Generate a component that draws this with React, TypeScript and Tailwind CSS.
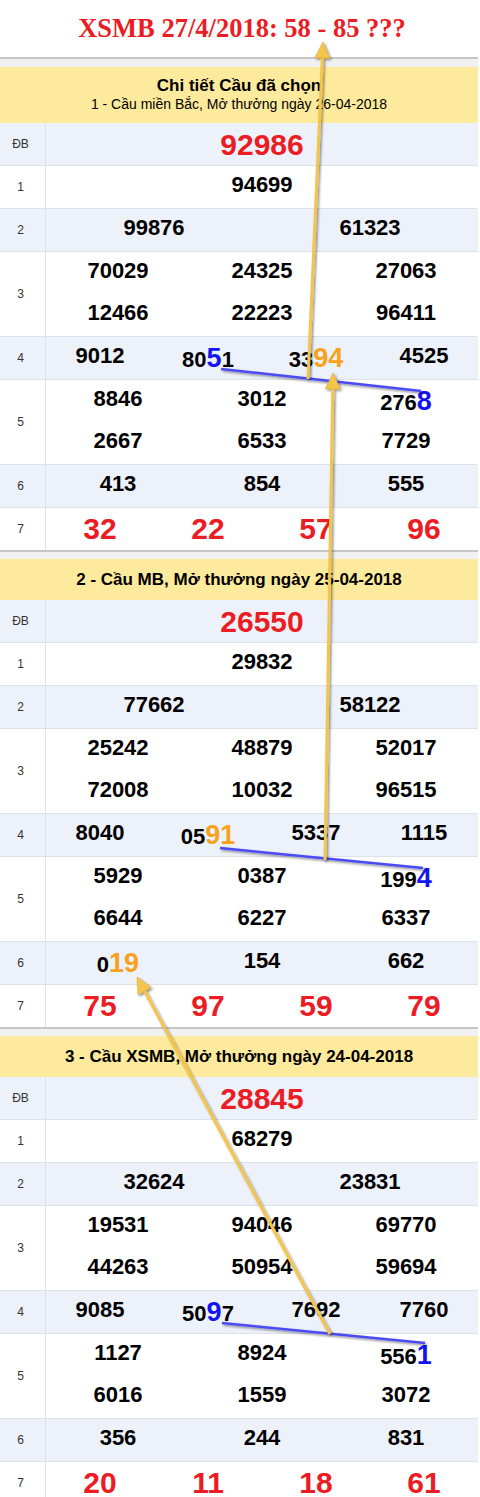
import React from "react";

type Tone = "blue" | "white";

interface RowData {
  label: string;
  cols: number;
  cells: string[];
  kind?: "normal" | "special" | "red";
}

interface SectionData {
  title: string;
  subtitle?: string;
  rows: RowData[];
}

const sections: SectionData[] = [
  {
    title: "Chi tiết Cầu đã chọn",
    subtitle: "1 - Cầu miền Bắc, Mở thưởng ngày 26-04-2018",
    rows: [
      { label: "ĐB", cols: 1, cells: ["92986"], kind: "special" },
      { label: "1", cols: 1, cells: ["94699"] },
      { label: "2", cols: 2, cells: ["99876", "61323"] },
      { label: "3", cols: 3, cells: ["70029", "24325", "27063", "12466", "22223", "96411"] },
      { label: "4", cols: 4, cells: ["9012", "80[5]1", "33{94}", "4525"] },
      { label: "5", cols: 3, cells: ["8846", "3012", "276[8]", "2667", "6533", "7729"] },
      { label: "6", cols: 3, cells: ["413", "854", "555"] },
      { label: "7", cols: 4, cells: ["32", "22", "57", "96"], kind: "red" },
    ],
  },
  {
    title: "2 - Cầu MB, Mở thưởng ngày 25-04-2018",
    rows: [
      { label: "ĐB", cols: 1, cells: ["26550"], kind: "special" },
      { label: "1", cols: 1, cells: ["29832"] },
      { label: "2", cols: 2, cells: ["77662", "58122"] },
      { label: "3", cols: 3, cells: ["25242", "48879", "52017", "72008", "10032", "96515"] },
      { label: "4", cols: 4, cells: ["8040", "05{91}", "5337", "1115"] },
      { label: "5", cols: 3, cells: ["5929", "0387", "199[4]", "6644", "6227", "6337"] },
      { label: "6", cols: 3, cells: ["0{19}", "154", "662"] },
      { label: "7", cols: 4, cells: ["75", "97", "59", "79"], kind: "red" },
    ],
  },
  {
    title: "3 - Cầu XSMB, Mở thưởng ngày 24-04-2018",
    rows: [
      { label: "ĐB", cols: 1, cells: ["28845"], kind: "special" },
      { label: "1", cols: 1, cells: ["68279"] },
      { label: "2", cols: 2, cells: ["32624", "23831"] },
      { label: "3", cols: 3, cells: ["19531", "94046", "69770", "44263", "50954", "59694"] },
      { label: "4", cols: 4, cells: ["9085", "50[9]7", "7692", "7760"] },
      { label: "5", cols: 3, cells: ["1127", "8924", "556[1]", "6016", "1559", "3072"] },
      { label: "6", cols: 3, cells: ["356", "244", "831"] },
      { label: "7", cols: 4, cells: ["20", "11", "18", "61"], kind: "red" },
    ],
  },
];

// [x] = blue digit, {x} = orange digit
function CellText({ text }: { text: string }) {
  const parts = text.split(/(\[[^\]]+\]|\{[^}]+\})/).filter(Boolean);
  return (
    <>
      {parts.map((p, i) => {
        if (p.startsWith("[")) {
          return (
            <span key={i} className="text-[27px] font-bold text-[#1414f2]">
              {p.slice(1, -1)}
            </span>
          );
        }
        if (p.startsWith("{")) {
          return (
            <span key={i} className="text-[27px] font-bold text-[#f7a21c]">
              {p.slice(1, -1)}
            </span>
          );
        }
        return <span key={i}>{p}</span>;
      })}
    </>
  );
}

const gridCols: Record<number, string> = {
  1: "grid-cols-1",
  2: "grid-cols-2",
  3: "grid-cols-3",
  4: "grid-cols-4",
};

function Row({ row, tone, last }: { row: RowData; tone: Tone; last: boolean }) {
  const bg = tone === "blue" ? "bg-[#edf1fa]" : "bg-white";
  const kind = row.kind ?? "normal";
  const textCls =
    kind === "normal"
      ? "pt-[6px] text-[22px] font-bold text-black"
      : kind === "special"
        ? "pt-[5px] text-[30px] font-bold text-[#ec1c24]"
        : "pt-[4px] text-[30px] font-bold text-[#ec1c24]";

  return (
    <div className={`flex ${bg} ${last ? "" : "border-b border-[#dde2ea]"}`}>
      <div className="w-[46px] shrink-0 border-r border-[#dde2ea] flex items-center justify-center pr-[4px] text-[12px] text-[#333]">
        {row.label}
      </div>
      <div className={`flex-1 grid ${gridCols[row.cols]}`}>
        {row.cells.map((c, i) => (
          <div key={i} className={`h-[42px] text-center leading-[normal] whitespace-nowrap ${textCls}`}>
            <CellText text={c} />
          </div>
        ))}
      </div>
    </div>
  );
}

function Section({ section }: { section: SectionData }) {
  return (
    <div>
      {section.subtitle ? (
        <div className="h-[56px] bg-[#feea9c] flex flex-col items-center justify-center text-black">
          <div className="text-[17px] font-bold leading-[19px]">{section.title}</div>
          <div className="text-[14px] leading-[19px]">{section.subtitle}</div>
        </div>
      ) : (
        <div className="h-[41px] bg-[#feea9c] flex items-center justify-center text-[17px] font-bold text-black">
          {section.title}
        </div>
      )}
      <div>
        {section.rows.map((r, i) => (
          <Row key={i} row={r} tone={i % 2 === 0 ? "blue" : "white"} last={i === section.rows.length - 1} />
        ))}
      </div>
      <div className="h-[2px] bg-[#c6c6c6]" />
      <div className="h-[7px] bg-[#f1f1f1]" />
    </div>
  );
}

function Arrow({ x1, y1, x2, y2 }: { x1: number; y1: number; x2: number; y2: number }) {
  const dx = x2 - x1;
  const dy = y2 - y1;
  const len = Math.hypot(dx, dy);
  const ux = dx / len;
  const uy = dy / len;
  const hl = 16;
  const hw = 7.5;
  const bx = x2 - ux * hl;
  const by = y2 - uy * hl;
  const pts = `${x2},${y2} ${bx - uy * hw},${by + ux * hw} ${bx + uy * hw},${by - ux * hw}`;
  return (
    <g filter="url(#shade)">
      <line x1={x1} y1={y1} x2={bx + ux * 2} y2={by + uy * 2} stroke="#f4c54b" strokeWidth={3} />
      <polygon points={pts} fill="#f4c54b" stroke="#dcab35" strokeWidth={0.6} />
    </g>
  );
}

function Overlay() {
  return (
    <svg className="absolute top-0 left-0 pointer-events-none" width={480} height={1497} viewBox="0 0 480 1497">
      <defs>
        <filter id="shade" x="-20%" y="-20%" width="140%" height="140%">
          <feDropShadow dx="1.5" dy="1.5" stdDeviation="1.2" floodColor="#000" floodOpacity="0.45" />
        </filter>
      </defs>
      <g filter="url(#shade)" stroke="#4c4cf5" strokeWidth={2.5}>
        <line x1={221} y1={369} x2={421} y2={391} />
        <line x1={220} y1={848} x2={423} y2={868} />
        <line x1={222} y1={1323} x2={425} y2={1343} />
      </g>
      <Arrow x1={308} y1={379} x2={323} y2={42} />
      <Arrow x1={325} y1={860} x2={333} y2={373} />
      <Arrow x1={330} y1={1334} x2={137} y2={977} />
    </svg>
  );
}

export default function App() {
  return (
    <div className="relative w-[480px] bg-white pr-[2px] font-['Liberation_Sans',Arial,sans-serif] overflow-hidden">
      <div className="h-[57px] flex items-center justify-center pl-[6px]">
        <span className="font-['Liberation_Serif','Times_New_Roman',serif] text-[26.5px] font-bold text-[#ec1c24] leading-none">
          XSMB 27/4/2018: 58 - 85 ???
        </span>
      </div>
      <div className="h-[2px] bg-[#c6c6c6]" />
      <div className="h-[8px] bg-[#f1f1f1]" />
      {sections.map((s, i) => (
        <Section key={i} section={s} />
      ))}
      <Overlay />
    </div>
  );
}
